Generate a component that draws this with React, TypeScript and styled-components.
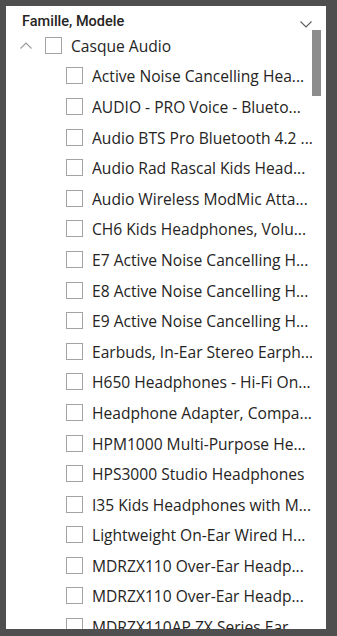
import React from "react";
import styled, { createGlobalStyle } from "styled-components";

const GlobalStyle = createGlobalStyle`
  html, body { margin: 0; padding: 0; background: #4f4f4f; }
  body { font-family: "Open Sans", "Noto Sans", sans-serif; }
`;

const Page = styled.div`
  padding: 6px 0 0 6px;
`;

const Panel = styled.div`
  width: 320px;
  height: 623px;
  background: #ffffff;
  display: flex;
  flex-direction: column;
  overflow: hidden;
`;

const Header = styled.div`
  height: 24px;
  flex: none;
  display: flex;
  align-items: flex-end;
  justify-content: space-between;
  padding: 0 14px 0 16px;
`;

const Title = styled.span`
  font-family: Roboto, "Noto Sans", sans-serif;
  font-weight: 500;
  font-size: 14.5px;
  line-height: 16px;
  color: #252423;
`;

const HeaderChevron = styled.svg`
  width: 12px;
  height: 7px;
  margin-bottom: 2px;
`;

const Body = styled.div`
  flex: 1;
  display: flex;
  min-height: 0;
`;

const List = styled.div`
  flex: 1;
  min-width: 0;
  overflow: hidden;
`;

const Track = styled.div`
  width: 9px;
  flex: none;
  margin-right: 5px;
`;

const Thumb = styled.div`
  height: 66px;
  background: #8c8c8c;
`;

const Row = styled.div<{ $indent: number }>`
  height: 30.6px;
  display: flex;
  align-items: center;
  padding-left: ${(p) => p.$indent}px;
  white-space: nowrap;
`;

const Expander = styled.svg`
  width: 12px;
  height: 7px;
  margin-right: 13px;
  flex: none;
`;

const Box = styled.span`
  width: 17px;
  height: 17px;
  box-sizing: border-box;
  border: 1px solid #a3a3a3;
  background: #fff;
  flex: none;
  margin-right: 9px;
`;

const Label = styled.span`
  font-size: 15.6px;
  line-height: 20px;
  padding-top: 1px;
  color: #252423;
  overflow: hidden;
`;

const items = [
  "Active Noise Cancelling Hea...",
  "AUDIO - PRO Voice - Blueto...",
  "Audio BTS Pro Bluetooth 4.2 ...",
  "Audio Rad Rascal Kids Head...",
  "Audio Wireless ModMic Atta...",
  "CH6 Kids Headphones, Volu...",
  "E7 Active Noise Cancelling H...",
  "E8 Active Noise Cancelling H...",
  "E9 Active Noise Cancelling H...",
  "Earbuds, In-Ear Stereo Earph...",
  "H650 Headphones - Hi-Fi On...",
  "Headphone Adapter, Compa...",
  "HPM1000 Multi-Purpose He...",
  "HPS3000 Studio Headphones",
  "I35 Kids Headphones with M...",
  "Lightweight On-Ear Wired H...",
  "MDRZX110 Over-Ear Headp...",
  "MDRZX110 Over-Ear Headp...",
  "MDRZX110AP ZX Series Ear...",
];

export default function App() {
  return (
    <>
      <GlobalStyle />
      <Page>
        <Panel>
          <Header>
            <Title>Famille, Modele</Title>
            <HeaderChevron viewBox="0 0 12 7">
              <path d="M0.5 0.5 L6 6 L11.5 0.5" fill="none" stroke="#5b5b5b" strokeWidth="1.1" />
            </HeaderChevron>
          </Header>
          <Body>
            <List>
              <Row $indent={14}>
                <Expander viewBox="0 0 12 7">
                  <path d="M0.5 6.5 L6 1 L11.5 6.5" fill="none" stroke="#9a9a9a" strokeWidth="1.1" />
                </Expander>
                <Box />
                <Label>Casque Audio</Label>
              </Row>
              {items.map((t, i) => (
                <Row key={i} $indent={60}>
                  <Box />
                  <Label>{t}</Label>
                </Row>
              ))}
            </List>
            <Track>
              <Thumb />
            </Track>
          </Body>
        </Panel>
      </Page>
    </>
  );
}
